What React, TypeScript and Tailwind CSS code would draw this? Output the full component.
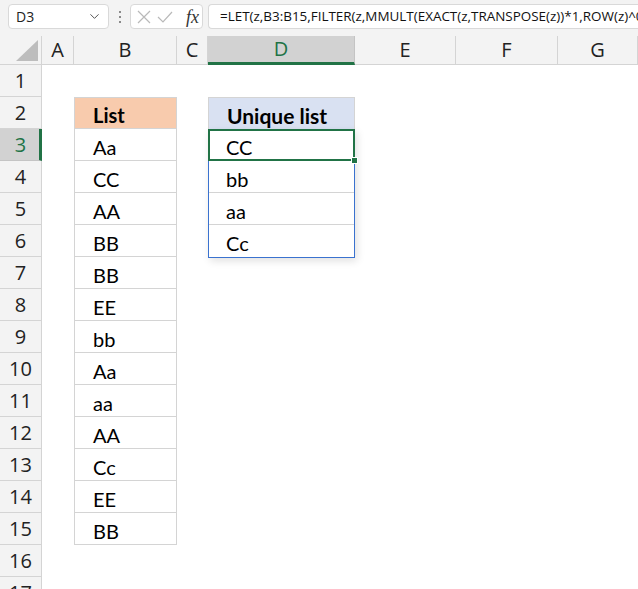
import { ChevronDown } from "lucide-react";

const COLS = [
  { key: "A", w: "w-[32px]" },
  { key: "B", w: "w-[103px]" },
  { key: "C", w: "w-[31px]" },
  { key: "D", w: "w-[147px]" },
  { key: "E", w: "w-[101px]" },
  { key: "F", w: "w-[102px]" },
  { key: "G", w: "w-[80px]" },
];

const LIST = ["Aa", "CC", "AA", "BB", "BB", "EE", "bb", "Aa", "aa", "AA", "Cc", "EE", "BB"];
const UNIQUE = ["CC", "bb", "aa", "Cc"];

const cellFont = "font-['Lato','Liberation_Sans',sans-serif] text-[20px] leading-none text-black";

const FormulaBar = () => (
  <div className="h-[36px] bg-[#f3f3f3] flex items-start pt-[4px] font-['Open_Sans','Noto_Sans',sans-serif]">
    <div className="ml-[8px] w-[101px] h-[25px] bg-white border border-[#d9d9d9] rounded-[4px] flex items-center justify-between pl-[7px] pr-[6px] text-[14px] text-[#222]">
      <span>D3</span>
      <ChevronDown size={15} strokeWidth={1.6} className="text-[#555]" />
    </div>
    <div className="w-[21px] h-[25px] flex flex-col items-center justify-center gap-[3px]">
      <span className="w-[2px] h-[2px] bg-[#8a8a8a]" />
      <span className="w-[2px] h-[2px] bg-[#8a8a8a]" />
      <span className="w-[2px] h-[2px] bg-[#8a8a8a]" />
    </div>
    <div className="w-[73px] h-[25px] bg-white border border-[#d9d9d9] rounded-[4px] flex items-center pl-[6px] gap-[6px]">
      <svg width="14" height="14" viewBox="0 0 14 14" fill="none" stroke="#b9b9b9" strokeWidth="1.2">
        <path d="M1 1 L13 13 M13 1 L1 13" />
      </svg>
      <svg width="16" height="14" viewBox="0 0 16 14" fill="none" stroke="#b9b9b9" strokeWidth="1.2">
        <path d="M1 7 L6 12 L15 2" />
      </svg>
      <span className="ml-[7px] font-['Liberation_Serif',serif] italic text-[18px] leading-none text-[#333]">fx</span>
    </div>
    <div className="ml-[5px] flex-1 h-[25px] bg-white border border-r-0 border-[#d9d9d9] rounded-l-[4px] flex items-center pl-[11px] text-[13.45px] text-[#111] whitespace-nowrap overflow-hidden">
      =LET(z,B3:B15,FILTER(z,MMULT(EXACT(z,TRANSPOSE(z))*1,ROW(z)^0)=1))
    </div>
  </div>
);

const ColumnHeaders = () => (
  <div className="h-[29px] flex bg-[#f3f3f3] font-['Open_Sans','Noto_Sans',sans-serif] text-[20px]">
    <div className="w-[42px] border-r border-b border-[#d4d4d4] flex items-end justify-end pr-[3px] pb-[3px]">
      <svg width="22" height="21" viewBox="0 0 22 21">
        <polygon points="22,0 22,21 0,21" fill="#bdbdbd" />
      </svg>
    </div>
    {COLS.map((c) =>
      c.key === "D" ? (
        <div
          key={c.key}
          className={`${c.w} shrink-0 bg-[#d2d2d2] border-r border-[#c4c4c4] border-b-[3px] border-b-[#217346] flex items-center justify-center text-[#217346] leading-none`}
        >
          {c.key}
        </div>
      ) : (
        <div
          key={c.key}
          className={`${c.w} shrink-0 border-r border-b border-[#d4d4d4] flex items-center justify-center text-[#222] leading-none`}
        >
          {c.key}
        </div>
      )
    )}
  </div>
);

const RowHeader = ({ n }: { n: number }) =>
  n === 3 ? (
    <div className="w-[42px] h-[32px] shrink-0 bg-[#d2d2d2] border-r-[3px] border-r-[#217346] border-b border-b-[#c4c4c4] flex items-center justify-center pl-[2px] text-[#217346]">
      {n}
    </div>
  ) : (
    <div className="w-[42px] h-[32px] shrink-0 bg-[#f3f3f3] border-r border-b border-[#d4d4d4] flex items-center justify-center text-[#222]">
      {n}
    </div>
  );

const App = () => {
  const rows = Array.from({ length: 17 }, (_, i) => i + 1);

  return (
    <div className="w-[638px] h-[589px] bg-white overflow-hidden relative">
      <FormulaBar />
      <ColumnHeaders />

      <div className="flex">
        {/* row numbers */}
        <div className="flex flex-col font-['Open_Sans','Noto_Sans',sans-serif] text-[20px] leading-none">
          {rows.map((n) => (
            <RowHeader key={n} n={n} />
          ))}
        </div>

        {/* column A */}
        <div className="w-[32px] shrink-0" />

        {/* column B: List */}
        <div className={`w-[103px] shrink-0 flex flex-col pt-[32px] ${cellFont}`}>
          <div className="h-[32px] bg-[#f8cbad] border border-[#d4d4d4] flex items-center pt-[4px] pl-[18px] font-bold">
            List
          </div>
          {LIST.map((v, i) => (
            <div
              key={i}
              className="h-[32px] border-x border-b border-[#d4d4d4] flex items-center pt-[4px] pl-[18px]"
            >
              {v}
            </div>
          ))}
        </div>

        {/* column C */}
        <div className="w-[31px] shrink-0" />

        {/* column D: Unique list */}
        <div className={`w-[147px] shrink-0 flex flex-col pt-[32px] ${cellFont}`}>
          <div className="h-[32px] bg-[#d9e1f2] border border-[#d4d4d4] border-b-0 flex items-center pt-[4px] pl-[18px] font-bold text-[21px]">
            Unique list
          </div>
          <div className="border border-[#3a72cf] shadow-[2px_3px_8px_rgba(0,0,0,0.12)]">
            {UNIQUE.map((v, i) =>
              i === 0 ? (
                <div
                  key={i}
                  className="h-[32px] -m-px mb-0 border-2 border-[#217346] relative flex items-center pt-[3px] pl-[16px]"
                >
                  {v}
                  <span className="absolute -right-[5px] -bottom-[5px] w-[7px] h-[7px] bg-[#217346] border border-white" />
                </div>
              ) : (
                <div
                  key={i}
                  className={`h-[32px] flex items-center pt-[4px] pl-[17px] ${i < UNIQUE.length - 1 ? "border-b border-[#d4d4d4]" : ""}`}
                >
                  {v}
                </div>
              )
            )}
          </div>
        </div>
      </div>
    </div>
  );
};

export default App;
